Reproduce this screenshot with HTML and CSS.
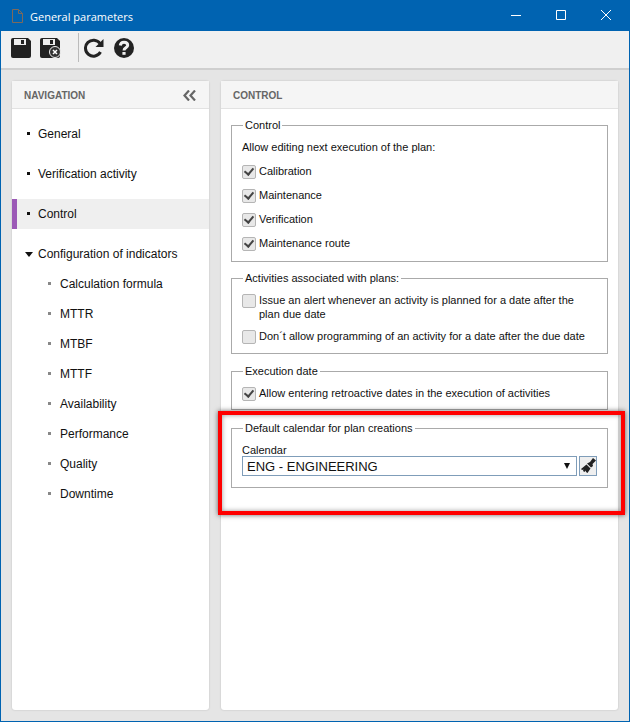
FILE: index.html
```html
<!DOCTYPE html>
<html lang="en">
<head>
    <meta charset="UTF-8">
    <title>General parameters</title>
    <link rel="stylesheet" href="styles.css">
</head>
<body>

    <div class="window">
        <!-- Title bar -->
        <div class="titlebar">
            <svg class="doc-icon" width="11" height="14" viewBox="0 0 11 14" fill="none" stroke="#7d6a5c">
                <path d="M.5.5h6l4 4v9H.5zM6.500.5v4h4"/>
            </svg>
            <span class="title">General parameters</span>
            <div class="win-buttons">
                <svg width="10" height="10" viewBox="0 0 10 10" stroke="#fff" fill="none"><path d="M0 5.500h10"/></svg>
                <svg width="10" height="10" viewBox="0 0 10 10" stroke="#fff" fill="none"><path d="M.5.5h9v9h-9z"/></svg>
                <svg width="10" height="10" viewBox="0 0 10 10" stroke="#fff" fill="none"><path d="M0 0l10 10M10 0L0 10"/></svg>
            </div>
        </div>

        <!-- Toolbar -->
        <div class="toolbar">
            <svg class="tool" width="20" height="20" viewBox="0 0 20 20">
                <path fill="#222" d="M2 0h15l3 3v15a2 2 0 0 1-2 2H2a2 2 0 0 1-2-2V2a2 2 0 0 1 2-2z"/>
                <path fill="#eee" d="M3 1h12v6H3z"/><path fill="#222" d="M10 2h3v4h-3z"/>
            </svg>
            <svg class="tool" width="21" height="20" viewBox="0 0 21 20">
                <path fill="#222" d="M2 0h15l3 3v15a2 2 0 0 1-2 2H2a2 2 0 0 1-2-2V2a2 2 0 0 1 2-2z"/>
                <path fill="#eee" d="M3 1h12v6H3z"/><path fill="#222" d="M10 2h3v4h-3z"/>
                <circle cx="15" cy="14" r="5.500" fill="#333" stroke="#f0f0f0"/>
                <path stroke="#fff" stroke-width="1.500" d="M13 12l4 4M17 12l-4 4"/>
            </svg>
            <div class="tool-sep"></div>
            <svg class="tool" width="21" height="20" viewBox="0 0 21 20" fill="none">
                <path stroke="#222" stroke-width="3" d="M16.500 14a8 8 0 1 1-.5-8.500"/>
                <path fill="#222" d="M19.500 1v8h-8z"/>
            </svg>
            <svg class="tool" width="20" height="20" viewBox="0 0 20 20">
                <circle cx="10" cy="10" r="10" fill="#222"/>
                <path fill="none" stroke="#f0f0f0" stroke-width="3" d="M6.300 7.500C6.500 5.200 8 4.200 10 4.200c2.200 0 3.700 1.200 3.700 3 0 2.700-3.700 2.500-3.700 5.300"/>
                <path fill="#f0f0f0" d="M8.400 14h3.200v2.800H8.400z"/>
            </svg>
        </div>

        <div class="content">
            <!-- Navigation -->
            <div class="panel nav-panel">
                <div class="panel-header">
                    <span>NAVIGATION</span>
                    <svg width="13" height="11" viewBox="0 0 13 11" fill="none" stroke="#666" stroke-width="2.200">
                        <path d="M6 .5L1.500 5.500 6 10.500M12 .5L7.500 5.500 12 10.500"/>
                    </svg>
                </div>
                <ul class="nav-list">
                    <li class="nav-item">General</li>
                    <li class="nav-item">Verification activity</li>
                    <li class="nav-item active">Control</li>
                    <li class="nav-item group">Configuration of indicators</li>
                    <li class="nav-sub">Calculation formula</li>
                    <li class="nav-sub">MTTR</li>
                    <li class="nav-sub">MTBF</li>
                    <li class="nav-sub">MTTF</li>
                    <li class="nav-sub">Availability</li>
                    <li class="nav-sub">Performance</li>
                    <li class="nav-sub">Quality</li>
                    <li class="nav-sub">Downtime</li>
                </ul>
            </div>

            <!-- Control form -->
            <div class="panel form-panel">
                <div class="panel-header"><span>CONTROL</span></div>
                <div class="form-body">
                    <fieldset class="group-box box-control">
                        <legend>Control</legend>
                        <div class="hint">Allow editing next execution of the plan:</div>
                        <label class="check on">Calibration</label>
                        <label class="check on">Maintenance</label>
                        <label class="check on">Verification</label>
                        <label class="check on">Maintenance route</label>
                    </fieldset>

                    <fieldset class="group-box box-activities">
                        <legend>Activities associated with plans:</legend>
                        <label class="check tall">Issue an alert whenever an activity is planned for a date after the plan due date</label>
                        <label class="check">Don´t allow programming of an activity for a date after the due date</label>
                    </fieldset>

                    <fieldset class="group-box box-date">
                        <legend>Execution date</legend>
                        <label class="check on">Allow entering retroactive dates in the execution of activities</label>
                    </fieldset>

                    <fieldset class="group-box box-calendar">
                        <legend>Default calendar for plan creations</legend>
                        <div class="field-label">Calendar</div>
                        <div class="select-row">
                            <div class="select">ENG - ENGINEERING</div>
                            <div class="clear-btn">
                                <svg width="16" height="16" viewBox="0 0 16 16">
                                    <path fill="#222" d="M10 4l3-4 3 2.500-3.500 3.500 .5 2-2 1.500L7 5.500z"/>
                                    <path fill="#222" d="M6.500 6.500l4 4-3 4.500-1.500-1-.5-1.500-1 1.500-1.500-1 .5-1.500-1.500.5L1 11z"/>
                                </svg>
                            </div>
                        </div>
                    </fieldset>
                </div>
            </div>
        </div>

        <!-- Highlight drawn over the screenshot -->
        <div class="highlight"></div>
    </div>

</body>
</html>
```

FILE: styles.css
```css
* {
    margin: 0;
    padding: 0;
    box-sizing: border-box;
}

body {
    font-family: 'Liberation Sans', Arial, sans-serif;
    font-size: 12px;
    color: #111;
    background-color: #e5e5e5;
}

.window {
    position: relative;
    display: flex;
    flex-direction: column;
    width: 630px;
    height: 722px;
    border: 1px solid #0063b1;
    overflow: hidden;
}

/* Title bar */
.titlebar {
    display: flex;
    align-items: center;
    height: 30px;
    background-color: #0063b1;
    color: #fff;
    padding-left: 11px;
    flex-shrink: 0;
}

.doc-icon {
    margin-right: 7px;
}

.title {
    font-family: 'Open Sans', sans-serif;
    font-size: 11px;
}

.win-buttons {
    display: flex;
    gap: 35px;
    margin-left: auto;
    margin-right: 18px;
    margin-bottom: 2px;
    align-items: center;
}

/* Toolbar */
.toolbar {
    display: flex;
    align-items: flex-start;
    height: 39px;
    background-color: #f0f0f0;
    border-bottom: 2px solid #cfcfcf;
    padding: 7px 0 0 10px;
    flex-shrink: 0;
}

.tool {
    margin-right: 9px;
}

.tool-sep {
    width: 1px;
    height: 29px;
    background-color: #bbb;
    margin: -5px 5px 0 8px;
}

/* Panels */
.content {
    display: flex;
    gap: 12px;
    flex: 1;
    padding: 11px;
}

.panel {
    background-color: #fff;
    border-radius: 3px;
    box-shadow: 0 0 2px rgba(0, 0, 0, 0.2);
}

.nav-panel {
    width: 197px;
}

.form-panel {
    width: 397px;
}

.panel-header {
    display: flex;
    align-items: center;
    justify-content: space-between;
    height: 28px;
    padding: 2px 13px 0 12px;
    background-color: #f5f5f5;
    border-bottom: 1px solid #e2e2e2;
    color: #666;
    font-size: 10px;
    font-weight: bold;
}

/* Navigation list */
.nav-list {
    list-style: none;
    padding-top: 10px;
}

.nav-item {
    position: relative;
    height: 30px;
    line-height: 30px;
    margin-bottom: 10px;
    padding-left: 26px;
}

.nav-item::before {
    content: "";
    position: absolute;
    left: 15px;
    top: 13px;
    width: 3px;
    height: 3px;
    background-color: #111;
}

.nav-item.active {
    background-color: #efefef;
    border-left: 5px solid #9b59b6;
    padding-left: 21px;
}

.nav-item.active::before {
    left: 10px;
}

.nav-item.group::before {
    left: 13px;
    top: 13px;
    width: 0;
    height: 0;
    background: none;
    border-left: 4px solid transparent;
    border-right: 4px solid transparent;
    border-top: 5px solid #111;
}

.nav-item.group {
    margin-bottom: 0;
}

.nav-sub {
    position: relative;
    height: 30px;
    line-height: 30px;
    padding-left: 48px;
}

.nav-sub::before {
    content: "";
    position: absolute;
    left: 36px;
    top: 13px;
    width: 3px;
    height: 3px;
    background-color: #888;
}

/* Form */
.form-body {
    padding: 10px 10px 0;
    font-size: 11px;
}

.group-box {
    border: 1px solid #aaa;
    padding: 0 10px;
}

.group-box legend {
    margin-left: 1px;
    padding: 0 2px;
    line-height: 13px;
}

.hint {
    margin-top: 8px;
    margin-bottom: 5px;
    line-height: 14px;
}

.box-control {
    height: 143px;
    margin-bottom: 10px;
}

.box-activities {
    height: 82px;
    margin-bottom: 11px;
    padding-top: 8px;
}

.box-date {
    height: 45px;
    margin-bottom: 12px;
    padding-top: 3px;
}

.box-calendar {
    height: 66px;
}

.check {
    position: relative;
    display: block;
    padding-left: 17px;
    min-height: 24px;
    line-height: 24px;
}

.check::before {
    content: "";
    position: absolute;
    left: 0;
    top: 6px;
    width: 12px;
    height: 12px;
    background-color: #e8e8e8;
    border: 1px solid #b5b5b5;
    border-radius: 2px;
}

.check.on::after {
    content: "";
    position: absolute;
    left: 4px;
    top: 7px;
    width: 4px;
    height: 7px;
    border-right: 2px solid #444;
    border-bottom: 2px solid #444;
    transform: rotate(40deg);
}

.check.tall {
    line-height: 14px;
    margin-bottom: 3px;
    min-height: 28px;
}

.check.tall::before {
    top: 1px;
}

.field-label {
    margin-top: 8px;
    margin-bottom: -1px;
    line-height: 14px;
}

.select-row {
    display: flex;
    gap: 2px;
}

.select {
    position: relative;
    flex: 1;
    height: 20px;
    line-height: 19px;
    font-size: 13px;
    padding-left: 4px;
    border: 1px solid #7f9db9;
    background-color: #fff;
}

.select::after {
    content: "";
    position: absolute;
    right: 6px;
    top: 6px;
    border-left: 3px solid transparent;
    border-right: 3px solid transparent;
    border-top: 6px solid #111;
}

.clear-btn {
    display: flex;
    align-items: center;
    justify-content: center;
    width: 18px;
    height: 20px;
    background-color: #efefef;
    border: 1px solid #7f9db9;
}

/* Red highlight */
.highlight {
    position: absolute;
    left: 217px;
    top: 410px;
    width: 407px;
    height: 104px;
    border: 4px solid #f00;
    box-shadow: 0 0 5px rgba(0, 0, 0, 0.6), inset 0 0 5px rgba(0, 0, 0, 0.4);
}
```
